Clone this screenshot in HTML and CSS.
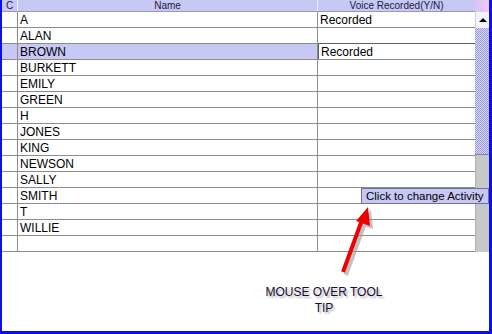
FILE: index.html
```html
<!DOCTYPE html>
<html lang="en">

<head>
	<meta charset="UTF-8">
	<title>Voice Recorded</title>
	<link rel="stylesheet" href="styles.css">
</head>

<body>
	<div class="frame">
		<div class="grid-area">
			<div class="table">
				<div class="row head">
					<div class="cell c">C</div>
					<div class="cell name">Name</div>
					<div class="cell voice">Voice Recorded(Y/N)</div>
				</div>
				<div class="row"><div class="cell c"></div><div class="cell name">A</div><div class="cell voice">Recorded</div></div>
				<div class="row"><div class="cell c"></div><div class="cell name">ALAN</div><div class="cell voice"></div></div>
				<div class="row selected"><div class="cell c"></div><div class="cell name">BROWN</div><div class="cell voice">Recorded</div></div>
				<div class="row"><div class="cell c"></div><div class="cell name">BURKETT</div><div class="cell voice"></div></div>
				<div class="row"><div class="cell c"></div><div class="cell name">EMILY</div><div class="cell voice"></div></div>
				<div class="row"><div class="cell c"></div><div class="cell name">GREEN</div><div class="cell voice"></div></div>
				<div class="row"><div class="cell c"></div><div class="cell name">H</div><div class="cell voice"></div></div>
				<div class="row"><div class="cell c"></div><div class="cell name">JONES</div><div class="cell voice"></div></div>
				<div class="row"><div class="cell c"></div><div class="cell name">KING</div><div class="cell voice"></div></div>
				<div class="row"><div class="cell c"></div><div class="cell name">NEWSON</div><div class="cell voice"></div></div>
				<div class="row"><div class="cell c"></div><div class="cell name">SALLY</div><div class="cell voice"></div></div>
				<div class="row"><div class="cell c"></div><div class="cell name">SMITH</div><div class="cell voice"></div></div>
				<div class="row"><div class="cell c"></div><div class="cell name">T</div><div class="cell voice"></div></div>
				<div class="row"><div class="cell c"></div><div class="cell name">WILLIE</div><div class="cell voice"></div></div>
				<div class="row"><div class="cell c"></div><div class="cell name"></div><div class="cell voice"></div></div>
			</div>
			<div class="scrollbar">
				<div class="sb-corner"></div>
				<div class="sb-up"><span class="tri"></span></div>
				<div class="sb-thumb"></div>
				<div class="sb-track"></div>
			</div>
		</div>

		<div class="note">MOUSE OVER TOOL<br>TIP</div>

		<div class="tooltip">Click to change Activity</div>

		<svg class="arrow" width="60" height="80" viewBox="0 0 60 80">
			<g transform="translate(3,3)" fill="#999" opacity="0.6">
				<line x1="14" y1="66" x2="33" y2="14" stroke="#999" stroke-width="4" />
				<polygon points="39,1 41,20 27,15" />
			</g>
			<line x1="14" y1="66" x2="33" y2="14" stroke="#ee0000" stroke-width="4" />
			<polygon points="39,1 41,20 27,15" fill="#ee0000" />
		</svg>
	</div>
</body>

</html>
```

FILE: styles.css
```css
* {
	margin: 0;
	padding: 0;
	box-sizing: border-box;
}

body {
	background: #fff;
	font-family: "Liberation Sans", Arial, sans-serif;
}

.frame {
	position: relative;
	width: 492px;
	height: 334px;
	background: #fff;
	border-left: 2px solid #0a10e8;
	border-right: 3px solid #0a10e8;
	border-bottom: 3px solid #0a10e8;
}

.grid-area {
	display: flex;
}

.table {
	width: 473px;
}

.row {
	display: flex;
	height: 16px;
	border-bottom: 1px solid #8c8c8c;
}

.cell {
	font-size: 12px;
	line-height: 16px;
	color: #000;
	padding-left: 2px;
	white-space: nowrap;
	overflow: hidden;
}

.c {
	width: 16px;
	border-right: 1px solid #8c8c8c;
}

.name {
	width: 300px;
	border-right: 1px solid #8c8c8c;
}

.voice {
	width: 157px;
}

.row.head {
	height: 12px;
	background: #c8c8f4;
	border-bottom: 1px solid #9a9ab8;
}

.row.head .cell {
	font-size: 10px;
	line-height: 11px;
	color: #1a1a40;
	text-align: center;
	padding-left: 0;
	border-right-color: #eeeefc;
}

.row.head .c {
	text-align: left;
	padding-left: 4px;
}

.row.selected .c,
.row.selected .name {
	background: #c8c8f4;
}

.row.selected .voice {
	background: #fff;
	border-top: 1px solid #606060;
	border-left: 1px solid #606060;
	margin-top: -1px;
	height: 16px;
}

.scrollbar {
	width: 14px;
	display: flex;
	flex-direction: column;
	height: 252px;
}

.sb-corner {
	height: 12px;
	background: linear-gradient(90deg, #d4c4f4, #f2c8f0);
}

.sb-up {
	height: 16px;
	background: #f4f4fc;
	border-left: 1px solid #d0d0d0;
	display: flex;
	align-items: center;
	justify-content: center;
}

.tri {
	width: 0;
	height: 0;
	border-left: 4px solid transparent;
	border-right: 4px solid transparent;
	border-bottom: 4px solid #000;
}

.sb-thumb {
	height: 127px;
	background: repeating-conic-gradient(#9a9ad8 0 25%, #d8d8f4 0 50%) 0 0 / 2px 2px;
	border-bottom: 1px solid #8080b0;
}

.sb-track {
	flex: 1;
	background: #c8c8c8;
	border-left: 1px solid #b0b0b0;
}

.note {
	width: 200px;
	margin: 32px 0 0 222px;
	text-align: center;
	font-size: 12px;
	line-height: 16px;
	color: #1c0c34;
	text-shadow: 2px 2px 2px #b0b0b0;
}

.tooltip {
	position: absolute;
	left: 359px;
	top: 188px;
	width: 128px;
	height: 16px;
	background: #c8c8f4;
	border: 1px solid #7070a0;
	font-size: 11.5px;
	line-height: 14px;
	padding-left: 4px;
	color: #000;
	white-space: nowrap;
}

.arrow {
	position: absolute;
	left: 327px;
	top: 206px;
}
```
